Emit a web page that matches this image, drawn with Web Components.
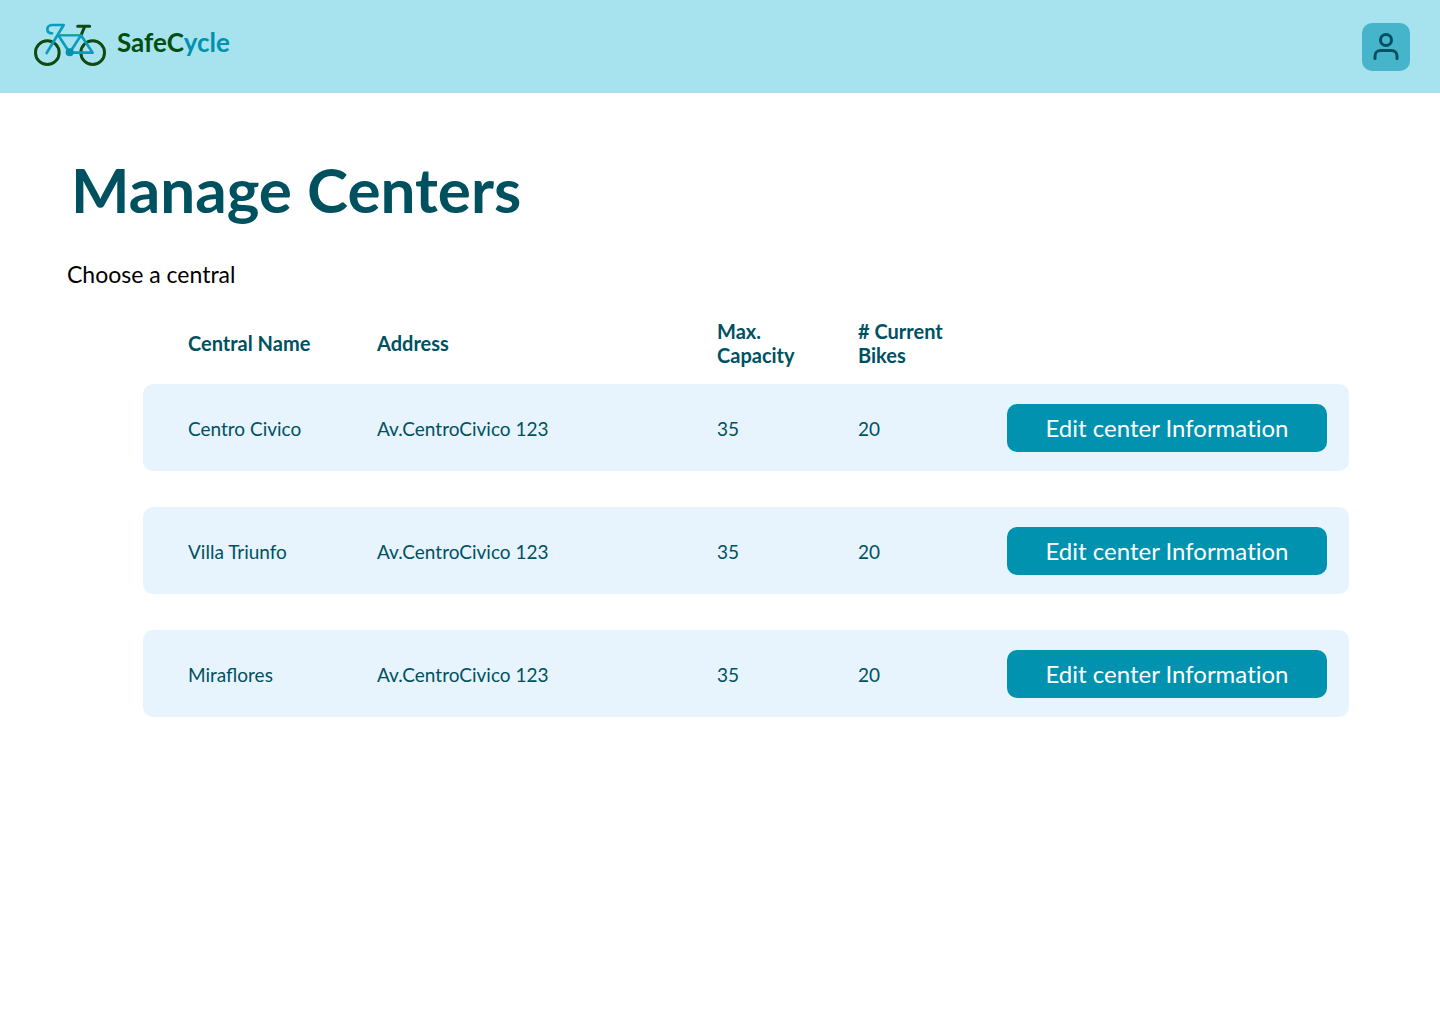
<!DOCTYPE html>
<html lang="en">
<head>
<meta charset="utf-8">
<meta name="viewport" content="width=device-width, initial-scale=1">
<title>SafeCycle – Manage Centers</title>
<style>
  :root {
    --sky: #a7e3ee;
    --aqua: #46b4ca;
    --teal: #0092af;
    --deep: #00515f;
    --row: #e7f4fe;
    --leaf: #004f10;
  }
  body {
    margin: 0;
    background: #fff;
    color: #000;
    font-family: Lato, "Noto Sans", sans-serif;
  }
</style>
</head>
<body>
<manage-page>
  <app-header slot="header">
    <brand-logo></brand-logo>
    <user-button slot="actions"></user-button>
  </app-header>
  <span slot="title">Manage Centers</span>
  <span slot="intro">Choose a central</span>
  <centers-table>
    <center-record name="Centro Civico" address="Av.CentroCivico 123" capacity="35" bikes="20"></center-record>
    <center-record name="Villa Triunfo" address="Av.CentroCivico 123" capacity="35" bikes="20"></center-record>
    <center-record name="Miraflores" address="Av.CentroCivico 123" capacity="35" bikes="20"></center-record>
  </centers-table>
</manage-page>

<script>
class BaseElement extends HTMLElement {
  constructor() {
    super();
    this.attachShadow({ mode: "open" }).innerHTML = this.constructor.markup;
  }
}

class ManagePage extends BaseElement {
  static markup = `
    <style>
      :host { display: flex; flex-direction: column; min-height: 100vh; }
      main { display: flex; flex-direction: column; padding: 60px 91px 48px 67px; }
      h1 { margin: 0 0 0 4px; font-size: 62px; line-height: 72px; font-weight: 700; color: var(--deep); }
      p { margin: 35px 0 0; font-size: 23px; line-height: 28px; }
      .list { margin: 31px 0 0 76px; }
    </style>
    <slot name="header"></slot>
    <main>
      <h1><slot name="title"></slot></h1>
      <p><slot name="intro"></slot></p>
      <div class="list"><slot></slot></div>
    </main>`;
}

class AppHeader extends BaseElement {
  static markup = `
    <style>
      :host { display: block; }
      header { display: flex; align-items: center; justify-content: space-between;
        box-sizing: border-box; min-height: 93px; padding: 0 30px 0 34px; background: var(--sky); }
    </style>
    <header><slot></slot><slot name="actions"></slot></header>`;
}

class BrandLogo extends BaseElement {
  static markup = `
    <style>
      :host { display: block; }
      a { display: flex; align-items: center; gap: 11px; padding-bottom: 3px; text-decoration: none;
        font-size: 26px; line-height: 32px; font-weight: 700; color: var(--leaf); }
      svg { display: block; }
      .name { padding-bottom: 6px; }
      .tail { color: var(--teal); }
    </style>
    <a href="#">
      <svg width="72" height="44" viewBox="42 40 216 132" fill="none" stroke-linecap="round" stroke-linejoin="round" aria-hidden="true">
        <g stroke="#0f4a10" stroke-width="9">
          <circle cx="82" cy="129" r="35.5"/>
          <circle cx="218" cy="129" r="35.5"/>
          <path d="M173 50H209M194 51L183 77"/>
        </g>
        <g stroke="#0a9cbd" stroke-width="8">
          <path d="M96 71C87 71 82 66 82 59C82 51 88 46 96 46H131L80 130"/>
          <path d="M115 77L149 129L183 77L218 129H149"/>
        </g>
        <path d="M119 75H179" stroke="#3fa98c" stroke-width="4"/>
        <path d="M119 78H179" stroke="#0a9cbd" stroke-width="5"/>
        <circle cx="149" cy="128" r="12" fill="#0092af"/>
      </svg>
      <span class="name">SafeC<span class="tail">ycle</span></span>
    </a>`;
}

class UserButton extends BaseElement {
  static markup = `
    <style>
      :host { display: block; }
      button { display: flex; align-items: center; justify-content: center; width: 48px; height: 48px;
        padding: 0; border: 0; border-radius: 10px; background: var(--aqua); color: var(--deep); cursor: pointer; }
    </style>
    <button type="button" aria-label="Account">
      <svg width="28" height="28" viewBox="0 0 28 28" fill="none" stroke="currentColor" stroke-width="3" stroke-linecap="round" aria-hidden="true">
        <circle cx="14" cy="7" r="5.5"/>
        <path d="M3 25.500V23A5.5 5.5 0 0 1 8.500 17.500H19.500A5.5 5.5 0 0 1 25 23V25.500"/>
      </svg>
    </button>`;
}

class EditButton extends BaseElement {
  static markup = `
    <style>
      :host { display: block; }
      button { display: block; width: 100%; height: 48px; padding: 0 16px; border: 0; border-radius: 10px;
        background: var(--teal); color: #fff; font: inherit; font-size: 24px; line-height: 28px;
        font-variant-ligatures: none; cursor: pointer; }
    </style>
    <button type="button"><slot></slot></button>`;
}

class CenterRecord extends HTMLElement {
  get values() {
    return ["name", "address", "capacity", "bikes"].map(key => this.getAttribute(key));
  }
}

class CentersTable extends BaseElement {
  static markup = `
    <style>
      :host { display: block; font-size: 19px; line-height: 24px; color: var(--deep); }
      table, tbody { display: grid; }
      tbody { gap: 36px; margin-top: 17px; }
      thead { display: block; }
      tr { display: grid; align-items: center; padding: 0 22px 0 45px;
        grid-template-columns: 189px minmax(190px, 1fr) 141px 149px 320px; }
      tbody tr { padding-top: 20px; padding-bottom: 19px; border-radius: 10px; background: var(--row); }
      th, td { padding: 0; text-align: left; font-weight: 400; }
      thead th { font-size: 20px; font-weight: 700; }
      .value { padding-top: 2px; }
    </style>
    <table>
      <thead>
        <tr>
          <th scope="col">Central Name</th>
          <th scope="col">Address</th>
          <th scope="col">Max.<br>Capacity</th>
          <th scope="col"># Current<br>Bikes</th>
          <td></td>
        </tr>
      </thead>
      <tbody></tbody>
    </table>`;

  connectedCallback() {
    const body = this.shadowRoot.querySelector("tbody");
    body.replaceChildren(...[...this.querySelectorAll("center-record")].map(record => {
      const row = document.createElement("tr");
      record.values.forEach((value, index) => {
        const cell = document.createElement(index ? "td" : "th");
        if (!index) cell.scope = "row";
        cell.className = "value";
        cell.textContent = value;
        row.append(cell);
      });
      const action = document.createElement("td");
      const button = document.createElement("edit-button");
      button.textContent = "Edit center Information";
      action.append(button);
      row.append(action);
      return row;
    }));
  }
}

customElements.define("center-record", CenterRecord);
customElements.define("edit-button", EditButton);
customElements.define("user-button", UserButton);
customElements.define("brand-logo", BrandLogo);
customElements.define("app-header", AppHeader);
customElements.define("centers-table", CentersTable);
customElements.define("manage-page", ManagePage);
</script>
</body>
</html>
